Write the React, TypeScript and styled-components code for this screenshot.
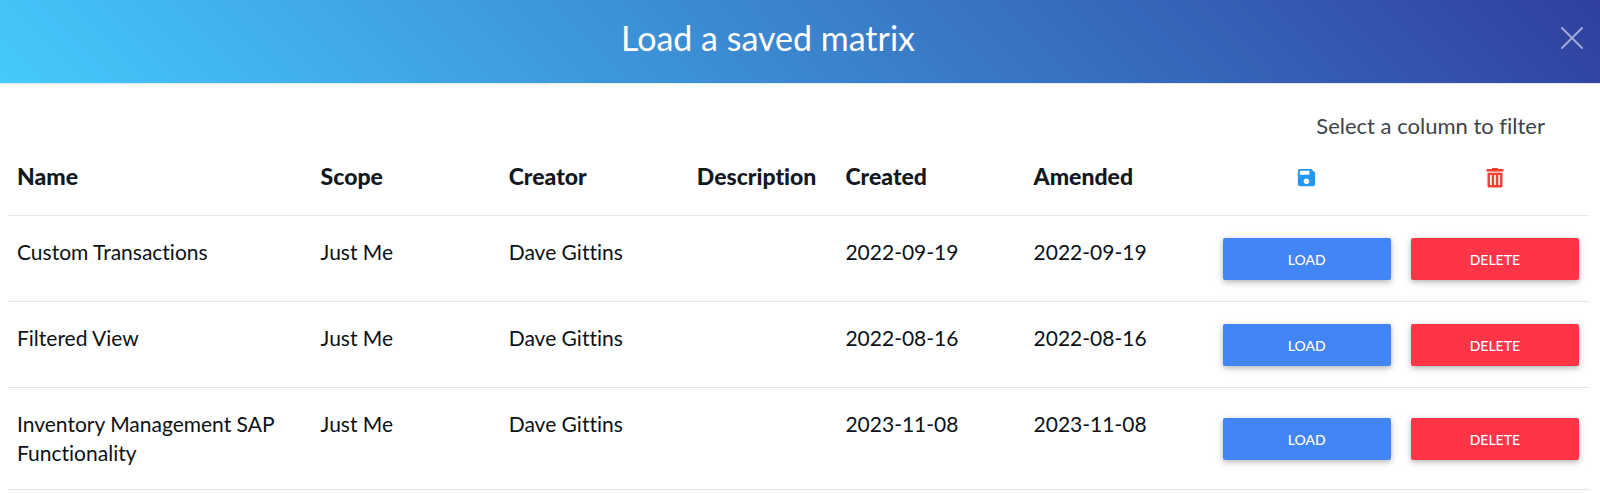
import React from "react";
import styled, { createGlobalStyle } from "styled-components";
import { MdSave } from "react-icons/md";

const GlobalStyle = createGlobalStyle`
  *, *::before, *::after { box-sizing: border-box; }
  body {
    margin: 0;
    background: #fff;
    color: #0c1116;
    font-family: Lato, "Liberation Sans", sans-serif;
    font-size: 21px;
    font-variant-ligatures: none;
    line-height: 29px;
  }
`;

const Header = styled.header`
  display: flex;
  align-items: center;
  gap: 8px;
  padding: 16px 0 24px;
  border-bottom: 1px solid #e9ecef;
  background: linear-gradient(45deg, #45cafc, #303f9f);
  background-clip: padding-box;
`;

const Title = styled.h1`
  flex: 1;
  margin: 0;
  color: #fff;
  font-size: 34px;
  font-weight: 400;
  line-height: 43px;
  text-align: center;
`;

const CloseButton = styled.button`
  display: flex;
  justify-content: center;
  width: 56px;
  padding: 8px;
  border: 0;
  background: none;
  color: rgba(255, 255, 255, 0.55);
  cursor: pointer;
`;

const Body = styled.main`
  padding: 27px 11px 0 8px;
`;

const Hint = styled.p`
  margin: 0;
  padding-right: 44px;
  color: #41434a;
  font-size: 22px;
  text-align: right;
`;

const Table = styled.table`
  width: 100%;
  border-collapse: separate;
  border-spacing: 0;
  table-layout: fixed;
`;

const Col = styled.col<{ $width: string }>`
  width: ${(p) => p.$width};
`;

const HeadCell = styled.th<{ $align?: string }>`
  padding: 22px 9px 24px;
  border-bottom: 1px solid #e4e6e8;
  color: #12181f;
  font-size: 23px;
  font-weight: 900;
  text-align: ${(p) => p.$align ?? "left"};
  white-space: nowrap;

  svg {
    display: block;
    margin: 4px auto 2px;
  }
`;

const Cell = styled.td`
  padding: 21px 9px 22px;
  border-bottom: 1px solid #e2e6ea;
  vertical-align: top;
`;

const ActionCell = styled(Cell)`
  padding: 22px 10px 21px;
  vertical-align: middle;
`;

const ActionButton = styled.button<{ $color: string }>`
  display: block;
  width: 100%;
  height: 42px;
  border: 0;
  border-radius: 2px;
  background: ${(p) => p.$color};
  box-shadow: 0 2px 5px rgba(0, 0, 0, 0.18), 0 2px 10px rgba(0, 0, 0, 0.14);
  color: #fff;
  font-family: inherit;
  font-size: 14px;
  font-weight: 500;
  text-transform: uppercase;
  cursor: pointer;
`;

const CloseIcon = () => (
  <svg width="22" height="22" viewBox="0 0 22 22" stroke="currentColor" strokeWidth="2" strokeLinecap="round" aria-hidden="true">
    <path d="M1 1 21 21M21 1 1 21" />
  </svg>
);

const TrashIcon = () => (
  <svg width="18" height="20" viewBox="0 0 18 20" role="img" aria-label="Delete">
    <path fill="#f44336" d="M6 0h6v1h5.500v2.500H.5V1H6z" />
    <path fill="#f44336" opacity=".35" d="M1.500 3.500h15V5h-15z" />
    <path
      fill="#f44336"
      fillRule="evenodd"
      d="M1.500 5h15v13q0 1.500-1.500 1.500H3q-1.500 0-1.500-1.500zM4 7v10h1.700V7zM8.150 7v10h1.700V7zM12.300 7v10H14V7z"
    />
  </svg>
);

const widths = ["19.2%", "11.9%", "11.9%", "9.4%", "11.9%", "11.9%", "11.9%", "11.9%"];
const headings = ["Name", "Scope", "Creator", "Description", "Created", "Amended"];

const matrices = [
  { name: "Custom Transactions", scope: "Just Me", creator: "Dave Gittins", description: "", created: "2022-09-19", amended: "2022-09-19" },
  { name: "Filtered View", scope: "Just Me", creator: "Dave Gittins", description: "", created: "2022-08-16", amended: "2022-08-16" },
  { name: "Inventory Management SAP Functionality", scope: "Just Me", creator: "Dave Gittins", description: "", created: "2023-11-08", amended: "2023-11-08" },
];

export default function App() {
  return (
    <>
      <GlobalStyle />
      <Header>
        <Title>Load a saved matrix</Title>
        <CloseButton type="button" aria-label="Close">
          <CloseIcon />
        </CloseButton>
      </Header>
      <Body>
        <Hint>Select a column to filter</Hint>
        <Table>
          <colgroup>
            {widths.map((width, i) => (
              <Col key={i} $width={width} />
            ))}
          </colgroup>
          <thead>
            <tr>
              {headings.map((heading) => (
                <HeadCell key={heading} scope="col">{heading}</HeadCell>
              ))}
              <HeadCell scope="col" $align="center">
                <MdSave size={23} color="#2196f3" role="img" aria-label="Load" />
              </HeadCell>
              <HeadCell scope="col" $align="center">
                <TrashIcon />
              </HeadCell>
            </tr>
          </thead>
          <tbody>
            {matrices.map((m) => (
              <tr key={m.name}>
                <Cell>{m.name}</Cell>
                <Cell>{m.scope}</Cell>
                <Cell>{m.creator}</Cell>
                <Cell>{m.description}</Cell>
                <Cell>{m.created}</Cell>
                <Cell>{m.amended}</Cell>
                <ActionCell>
                  <ActionButton type="button" $color="#4285f4">Load</ActionButton>
                </ActionCell>
                <ActionCell>
                  <ActionButton type="button" $color="#ff3547">Delete</ActionButton>
                </ActionCell>
              </tr>
            ))}
          </tbody>
        </Table>
      </Body>
    </>
  );
}
